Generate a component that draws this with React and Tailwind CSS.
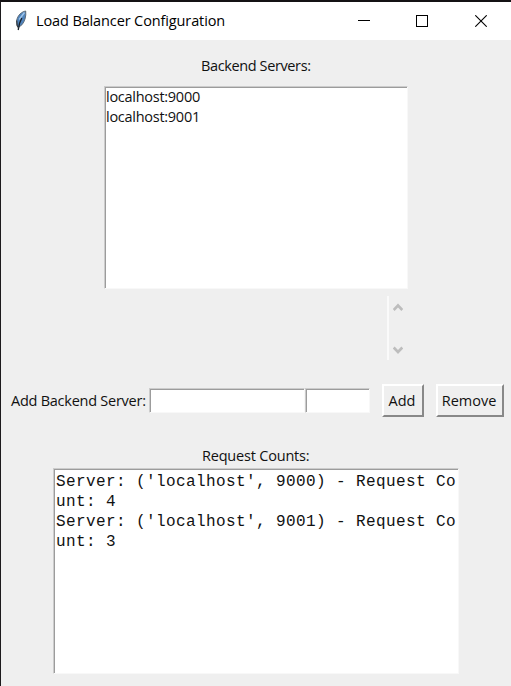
import React from "react";

const servers = ["localhost:9000", "localhost:9001"];
const countLines = [
  "Server: ('localhost', 9000) - Request Co",
  "unt: 4",
  "Server: ('localhost', 9001) - Request Co",
  "unt: 3",
];

const sunken =
  "border border-t-[#cccccc] border-l-[#cccccc] border-r-[#f8f8f8] border-b-[#f8f8f8] bg-white shadow-[inset_1px_1px_0_#9c9c9c] ";

function Feather() {
  return (
    <svg width="12" height="22" viewBox="0 0 12 22" className="block">
      <path d="M10.7 1C6.5 1.8 2.8 5 1.6 10.5L1.9 15L3.5 17.5L7.2 14.5C10 11 11.3 6 10.7 1Z" fill="#5084bd" stroke="#59636d" strokeWidth="0.9" />
      <path d="M9.5 2.5L4.2 9.5" stroke="#9fc4e8" strokeWidth="1.5" />
      <path d="M6.8 8L4.5 13.5L3.2 20" stroke="#17202a" strokeWidth="1.3" fill="none" />
      <path d="M1.7 10.5L2.2 15.5L3.5 18" stroke="#333a40" strokeWidth="1.2" fill="none" />
    </svg>
  );
}

function TitleBar() {
  return (
    <header className="flex h-[38px] items-center bg-white">
      <div className="ml-[14px] -mt-px"><Feather /></div>
      <h1 className="ml-[9px] w-[220px] whitespace-nowrap text-[14.5px] leading-5 tracking-[-0.12px] text-black">Load Balancer Configuration</h1>
      <div className="ml-auto mr-[24px] flex items-center">
        <svg className="mr-[46px]" width="12" height="12" shapeRendering="crispEdges"><path d="M0 5.5H12" stroke="#000" /></svg>
        <svg className="mr-[47px]" width="12" height="12" shapeRendering="crispEdges"><rect x="0.5" y="0.5" width="11" height="11" fill="none" stroke="#000" /></svg>
        <svg width="12" height="12"><path d="M0.3 0.3L11.7 11.7M11.7 0.3L0.3 11.7" fill="none" stroke="#000" strokeWidth="1.1" /></svg>
      </div>
    </header>
  );
}

function Entry({ className }) {
  return <div className={sunken + "h-[25px] " + className} />;
}

function Button({ children, className }) {
  return (
    <button className={"flex h-[33px] items-center justify-center whitespace-nowrap border-2 border-t-white border-l-white border-r-[#888888] border-b-[#888888] bg-[#efefef] pr-[2px] text-[14.5px] " + className}>
      {children}
    </button>
  );
}

export default function App() {
  return (
    <div className="flex h-[686px] w-[511px] flex-col overflow-hidden border-t-2 border-l border-t-[#141214] border-l-[#1c1a1c] bg-[#efefef] font-['Open_Sans','Noto_Sans',sans-serif] text-[#111]">
      <TitleBar />
      <main className="flex flex-col">
        <div className="mt-[16px] ml-[200px] h-5 whitespace-nowrap text-[14.5px] leading-5 tracking-[-0.38px]">Backend Servers:</div>
        <div className={sunken + "mt-[10px] ml-[103px] h-[203px] w-[304px] pl-px"}>
          {servers.map((s) => (
            <div key={s} className="h-5 whitespace-nowrap text-[14.5px] leading-5 tracking-[-0.27px]">{s}</div>
          ))}
        </div>
        <div className="mt-[7px] ml-[386px] flex h-[64px] w-[20px] flex-col items-center justify-between border-l-2 border-[#fafafa] pt-[7px] pb-[6px]">
          <svg width="10" height="8"><path d="M0.7 7L5 2.5L9.3 7" fill="none" stroke="#bdbdbd" strokeWidth="2.6" /></svg>
          <svg width="10" height="8"><path d="M0.7 1.5L5 6L9.3 1.5" fill="none" stroke="#bdbdbd" strokeWidth="2.6" /></svg>
        </div>
        <div className="mt-[24px] flex h-[33px] items-center">
          <span className="ml-[10px] w-[138px] whitespace-nowrap text-[14.5px] leading-5 tracking-[-0.25px]">Add Backend Server:</span>
          <Entry className="w-[156px] -mt-px" />
          <Entry className="w-[65px] -mt-px" />
          <Button className="ml-[12px] w-[42px]">Add</Button>
          <Button className="ml-[12px] w-[68px]">Remove</Button>
        </div>
        <div className="mt-[29px] ml-[201px] h-5 whitespace-nowrap text-[14.5px] leading-5 tracking-[-0.2px]">Request Counts:</div>
        <div className={sunken + "mt-[2px] ml-[52px] h-[206px] w-[406px] overflow-hidden pt-[3px] pl-[2px] font-['Liberation_Mono',monospace] text-[16px] leading-5 tracking-[0.4px]"}>
          {countLines.map((line, i) => (
            <div key={i} className="h-5 whitespace-pre">{line}</div>
          ))}
        </div>
      </main>
    </div>
  );
}
